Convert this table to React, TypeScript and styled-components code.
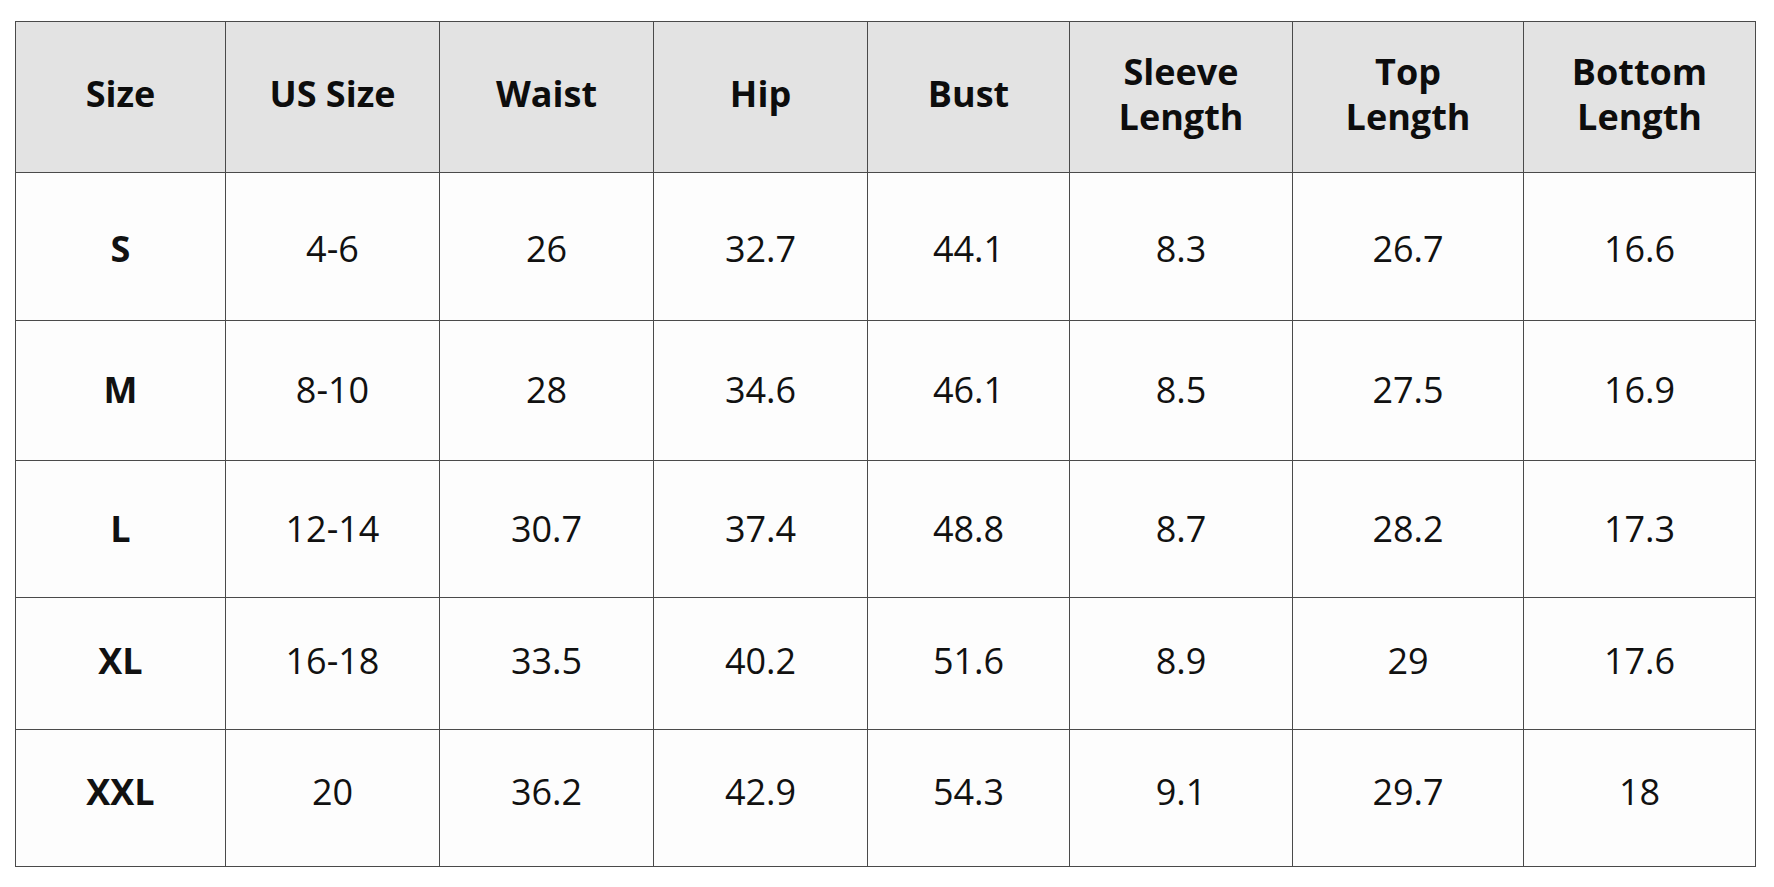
import React from "react";
import styled, { createGlobalStyle } from "styled-components";

const GlobalStyle = createGlobalStyle`
  html, body {
    margin: 0;
    padding: 0;
    background: #ffffff;
  }
  body {
    font-family: "Open Sans", "Noto Sans", "Liberation Sans", sans-serif;
    color: #111111;
  }
`;

const Page = styled.div`
  padding: 21px 0 0 15px;
`;

const Table = styled.table`
  border-collapse: collapse;
  table-layout: fixed;
  width: 1740px;
`;

const HeadCell = styled.th`
  background: #e3e3e3;
  border: 1px solid #4a4a4a;
  font-weight: 700;
  font-size: 36px;
  line-height: 45px;
  text-align: center;
  vertical-align: middle;
  padding: 0 0 7px 0;
  color: #0d0d0d;
`;

const Row = styled.tr<{ $h: number }>`
  height: ${(p) => p.$h}px;
`;

const Cell = styled.td<{ $bold?: boolean; $shift: number }>`
  background: #fdfdfd;
  border: 1px solid #4a4a4a;
  font-size: 36px;
  font-weight: ${(p) => (p.$bold ? 700 : 400)};
  text-align: center;
  vertical-align: middle;
  padding: ${(p) => (p.$shift > 0 ? `${p.$shift * 2}px 0 0 0` : `0 0 ${-p.$shift * 2}px 0`)};
  color: #111111;
`;

const widths = [210, 214, 214, 214, 202, 223, 231, 232];

const headers: React.ReactNode[] = [
  "Size",
  "US Size",
  "Waist",
  "Hip",
  "Bust",
  <>Sleeve<br />Length</>,
  <>Top<br />Length</>,
  <>Bottom<br />Length</>,
];

const rows = [
  { h: 148, s: 2, d: ["S", "4-6", "26", "32.7", "44.1", "8.3", "26.7", "16.6"] },
  { h: 140, s: -1, d: ["M", "8-10", "28", "34.6", "46.1", "8.5", "27.5", "16.9"] },
  { h: 137, s: -1, d: ["L", "12-14", "30.7", "37.4", "48.8", "8.7", "28.2", "17.3"] },
  { h: 132, s: -3, d: ["XL", "16-18", "33.5", "40.2", "51.6", "8.9", "29", "17.6"] },
  { h: 137, s: -7, d: ["XXL", "20", "36.2", "42.9", "54.3", "9.1", "29.7", "18"] },
];

export default function App() {
  return (
    <Page>
      <GlobalStyle />
      <Table>
        <colgroup>
          {widths.map((w, i) => (
            <col key={i} style={{ width: w }} />
          ))}
        </colgroup>
        <thead>
          <Row $h={151}>
            {headers.map((h, i) => (
              <HeadCell key={i}>{h}</HeadCell>
            ))}
          </Row>
        </thead>
        <tbody>
          {rows.map((r, i) => (
            <Row key={i} $h={r.h}>
              {r.d.map((v, j) => (
                <Cell key={j} $bold={j === 0} $shift={r.s}>
                  {v}
                </Cell>
              ))}
            </Row>
          ))}
        </tbody>
      </Table>
    </Page>
  );
}
